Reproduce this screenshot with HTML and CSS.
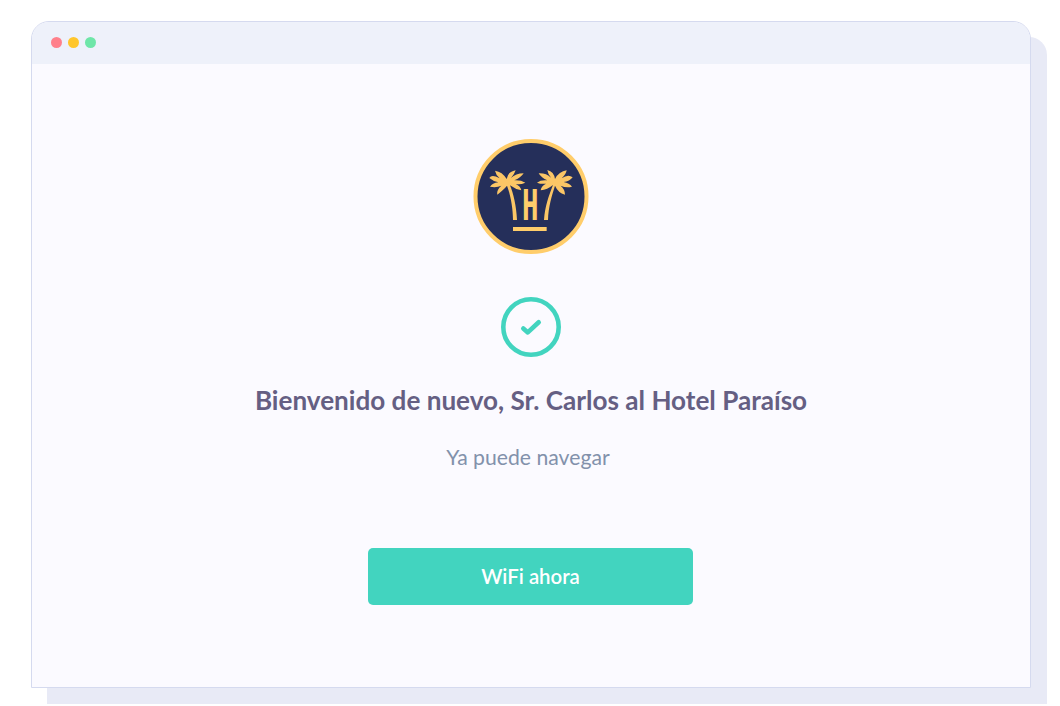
FILE: index.html
```html
<!DOCTYPE html>
<html lang="es">
<head>
    <meta charset="UTF-8">
    <meta name="viewport" content="width=device-width, initial-scale=1.0">
    <title>Hotel Paraíso</title>
    <link rel="stylesheet" href="styles.css">
</head>
<body>
    <div class="window">
        <div class="window-bar">
            <span class="dot red"></span>
            <span class="dot yellow"></span>
            <span class="dot green"></span>
        </div>
        <main class="content">
            <svg class="logo" viewBox="21 21 348 348">
                <circle cx="195" cy="193.5" r="166.5" fill="#252f5a" stroke="#ffcd6b" stroke-width="12"/>
                <!-- palm trees -->
                <g fill="#fbc666">
                    <path d="M122 141 Q124 120 149 115 Q145 127 135 138 Q149 124 173 124 Q164 138 145 145 Q165 144 178 152 Q163 159 149 156 Q163 162 166 175 Q148 172 132 160 C142 185 151 220 153 264 L141 264 C141 230 134 190 123 161 Q114 172 94 188 Q91 174 106 161 Q91 168 72 164 Q79 153 97 151 Q82 148 70 138 Q77 126 101 139 Q90 130 87 116 Q109 119 122 141Z"/>
                    <path d="M267 141 Q279 118 302 115 Q300 128 287 139 Q306 125 320 136 Q311 148 293 150 Q310 153 318 164 Q301 169 284 161 Q297 172 297 188 Q276 182 267 161 C258 190 247 224 246 264 L234 264 C237 223 248 192 261 159 Q244 173 224 175 Q226 161 240 155 Q226 157 213 152 Q224 143 244 145 Q226 138 218 124 Q241 123 255 137 Q246 127 244 114 Q264 119 267 141Z"/>
                </g>
                <text class="logo-letter" transform="translate(192.5 264) scale(.59 1)">H</text>
                <rect x="141" y="285" width="101" height="12" fill="#ffcd6b"/>
            </svg>
            <svg class="check" viewBox="0 0 60 60">
                <circle cx="30" cy="30" r="27.7" stroke-width="4.6"/>
                <path d="M22.3 31.5 L26.8 35.4 L37.7 25.2" stroke-width="4.6"/>
            </svg>
            <h1>Bienvenido de nuevo, Sr. Carlos al Hotel Paraíso</h1>
            <p>Ya puede navegar</p>
            <button type="button">WiFi ahora</button>
        </main>
    </div>
</body>
</html>
```
FILE: styles.css
```css
* {
    box-sizing: border-box;
}

body {
    margin: 0;
    min-height: 100vh;
    padding: 21px 0 0 31px;
    background-color: #fff;
    font-family: Lato, sans-serif;
}

.window {
    width: 1000px;
    height: 667px;
    border: 1px solid #d5daef;
    border-radius: 18px 18px 0 0;
    background-color: #fbfaff;
    box-shadow: 16px 16px 0 #e8eaf6;
}

.window-bar {
    display: flex;
    align-items: center;
    gap: 6px;
    height: 42px;
    padding: 0 0 1px 19px;
    border-radius: 17px 17px 0 0;
    background-color: #eef1fa;
}

.dot {
    width: 11px;
    height: 11px;
    border-radius: 50%;
}

.red {
    background-color: #ff808b;
}

.yellow {
    background-color: #ffc62b;
}

.green {
    background-color: #6ee6a8;
}

.content {
    display: flex;
    flex-direction: column;
    align-items: center;
    padding-top: 75px;
}

.logo {
    width: 116px;
    height: 116px;
}

.logo-letter {
    fill: #ffcd6b;
    font-family: "Liberation Mono", monospace;
    font-size: 140px;
    font-weight: 700;
    text-anchor: middle;
}

.check {
    width: 60px;
    height: 60px;
    margin-top: 42px;
    fill: none;
    stroke: #42d4bf;
    stroke-linecap: round;
    stroke-linejoin: round;
}

h1 {
    margin: 27px 0 0;
    color: #655f83;
    font-size: 26.1px;
    font-weight: 700;
    line-height: 32px;
}

p {
    margin: 27px 6px 0 0;
    color: #8291ab;
    font-size: 21.2px;
    line-height: 28px;
}

button {
    width: 325px;
    height: 57px;
    margin: 77px 1px 0 0;
    padding-bottom: 3px;
    border: none;
    border-radius: 5px;
    background-color: #42d4bf;
    color: #fff;
    font-family: inherit;
    font-size: 20.4px;
    font-weight: 600;
    cursor: pointer;
}
```
